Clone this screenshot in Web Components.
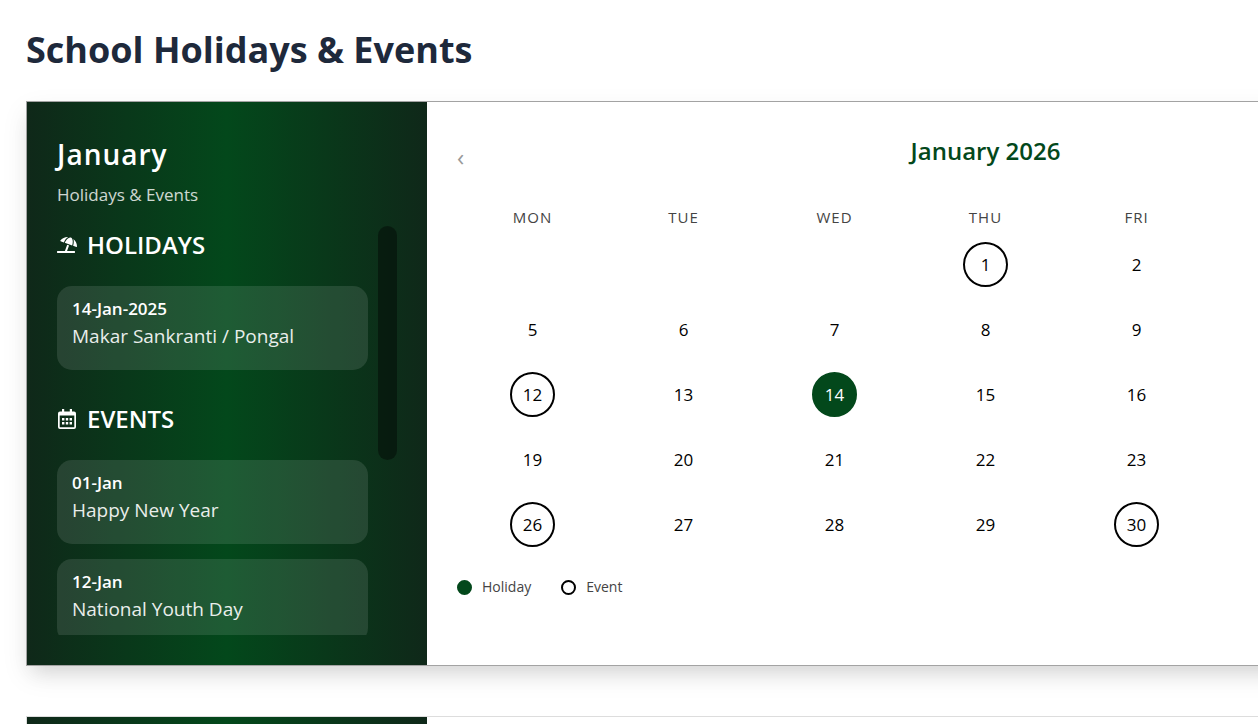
<!DOCTYPE html>
<html lang="en">
<head>
  <meta charset="UTF-8">
  <meta name="viewport" content="width=device-width, initial-scale=1.0">
  <title>School Holidays &amp; Events</title>
  <style>
    body {
      margin: 0;
      padding: 20px 26px 50px;
      overflow-x: hidden;
      background: #fff;
      color: #000;
      font-family: "Open Sans", "Noto Sans", sans-serif;
    }
    h1 {
      margin: 0 0 21px;
      font-size: 36px;
      line-height: 60px;
      font-weight: 700;
      color: #1e293b;
    }
  </style>
</head>
<body>
  <h1>School Holidays &amp; Events</h1>

  <month-card active>
    <month-panel slot="side" month="January">
      <event-group heading="HOLIDAYS" icon="beach">
        <event-item date="14-Jan-2025">Makar Sankranti / Pongal</event-item>
      </event-group>
      <event-group heading="EVENTS" icon="calendar">
        <event-item date="01-Jan">Happy New Year</event-item>
        <event-item date="12-Jan">National Youth Day</event-item>
      </event-group>
    </month-panel>
    <month-calendar year="2026" month="1" holidays="14" events="1,12,26,30"></month-calendar>
  </month-card>

  <month-card>
    <month-panel slot="side" month="February"></month-panel>
    <month-calendar year="2026" month="2"></month-calendar>
  </month-card>

  <script>
    const MONTHS = ['January', 'February', 'March', 'April', 'May', 'June', 'July',
      'August', 'September', 'October', 'November', 'December'];
    const WEEKDAYS = ['MON', 'TUE', 'WED', 'THU', 'FRI', 'SAT', 'SUN'];

    const ICONS = {
      beach: `<svg viewBox="0 0 640 512" width="20" height="16" fill="currentColor" aria-hidden="true">
        <path d="M115.38 136.9l102.11 37.18c35.19-81.54 86.21-144.29 139-173.7-95.88-4.89-188.78 36.96-248.53 111.8-6.69 8.4-2.66 21.05 7.42 24.72zm132.25 48.16l238.48 86.83c35.76-121.38 18.7-231.66-42.63-253.98-7.4-2.7-15.13-4-23.09-4-58.02.01-128.27 69.17-172.76 171.15zM521.48 60.5c6.22 16.3 10.83 34.6 13.2 55.19 5.74 49.89-1.42 108.23-18.95 166.98l102.62 37.36c10.09 3.67 21.31-3.43 21.57-14.17 2.32-95.69-41.91-187.44-118.44-245.36zM560 447.98H321.06L386 269.5l-60.14-21.9-72.9 200.37H16c-8.84 0-16 7.16-16 16.01v32.01C0 504.83 7.16 512 16 512h544c8.84 0 16-7.17 16-16v-32.01c0-8.84-7.16-16.01-16-16.01z"/>
      </svg>`,
      calendar: `<svg viewBox="0 0 20 20" width="20" height="20" fill="currentColor" aria-hidden="true">
        <path fill-rule="evenodd" d="M5 0h2.2v2.4h5.6V0H15v2.4h2a2 2 0 0 1 2 2V18a2 2 0 0 1-2 2H3a2 2 0 0 1-2-2V4.400a2 2 0 0 1 2-2h2zM2.700 6.500v11.300q0 .5.5.5h13.600q.5 0 .5-.5V6.500z"/>
        <path d="M5 9h2.400v2.400H5zM8.800 9h2.400v2.400H8.800zM12.600 9H15v2.400h-2.400zM5 13h2.400v2.400H5zM8.800 13h2.400v2.400H8.800zM12.600 13H15v2.400h-2.400z"/>
      </svg>`
    };

    class MonthCard extends HTMLElement {
      constructor() {
        super();
        this.attachShadow({ mode: 'open' });
        this.shadowRoot.innerHTML = `
          <style>
            :host {
              display: flex;
              min-width: 1519px;
              box-sizing: border-box;
              margin-bottom: 50px;
              border: 1px solid #ddd;
              background: #fff;
            }
            :host([active]) {
              border-color: #a3a3a3;
              box-shadow: 0 10px 25px rgba(0, 0, 0, 0.08), 0 12px 20px -8px rgba(0, 0, 0, 0.12);
            }
            ::slotted(month-panel) {
              flex: 0 0 400px;
            }
            ::slotted(month-calendar) {
              flex: 1;
            }
          </style>
          <slot name="side"></slot>
          <slot></slot>
        `;
      }
    }

    class MonthPanel extends HTMLElement {
      constructor() {
        super();
        this.attachShadow({ mode: 'open' });
      }

      connectedCallback() {
        this.shadowRoot.innerHTML = `
          <style>
            :host {
              display: block;
              box-sizing: border-box;
              padding: 30px;
              color: #fff;
              background: linear-gradient(90deg, #0f2819, #03481b, #0f2819);
            }
            h2 {
              margin: 0;
              font-size: 28px;
              line-height: 45px;
              font-weight: 600;
              letter-spacing: 1px;
            }
            p {
              margin: 4px 0 17px;
              font-size: 17px;
              line-height: 28px;
              opacity: 0.8;
            }
            .scroller {
              display: flex;
              justify-content: space-between;
              height: 409px;
              overflow: hidden;
            }
            .list {
              flex: 1;
              margin-right: 10px;
            }
            .thumb {
              width: 19px;
              height: 234px;
              border-radius: 10px;
              background: rgba(0, 0, 0, 0.4);
            }
          </style>
          <h2>${this.getAttribute('month')}</h2>
          <p>Holidays &amp; Events</p>
          <div class="scroller">
            <div class="list"><slot></slot></div>
            ${this.children.length ? '<div class="thumb"></div>' : ''}
          </div>
        `;
      }
    }

    class EventGroup extends HTMLElement {
      constructor() {
        super();
        this.attachShadow({ mode: 'open' });
      }

      connectedCallback() {
        this.shadowRoot.innerHTML = `
          <style>
            :host {
              display: block;
              margin-bottom: 30px;
            }
            h3 {
              display: flex;
              align-items: center;
              gap: 10px;
              margin: 0 0 22px;
              font-size: 24px;
              line-height: 38px;
              font-weight: 600;
            }
            .items {
              display: flex;
              flex-direction: column;
              gap: 15px;
            }
          </style>
          <h3>${ICONS[this.getAttribute('icon')]}<span>${this.getAttribute('heading')}</span></h3>
          <div class="items"><slot></slot></div>
        `;
      }
    }

    class EventItem extends HTMLElement {
      constructor() {
        super();
        this.attachShadow({ mode: 'open' });
      }

      connectedCallback() {
        this.shadowRoot.innerHTML = `
          <style>
            :host {
              display: block;
              padding: 10px 15px 20px;
              border-radius: 15px;
              background: rgba(255, 255, 255, 0.11);
            }
            strong {
              display: block;
              font-size: 17px;
              line-height: 26px;
              font-weight: 600;
            }
            span {
              display: block;
              font-size: 19px;
              line-height: 28px;
              opacity: 0.9;
            }
          </style>
          <strong>${this.getAttribute('date')}</strong>
          <span><slot></slot></span>
        `;
      }
    }

    class MonthCalendar extends HTMLElement {
      constructor() {
        super();
        this.attachShadow({ mode: 'open' });
      }

      // Comma separated attribute -> array of day numbers
      days(name) {
        return (this.getAttribute(name) || '').split(',').filter(Boolean).map(Number);
      }

      rows() {
        const year = Number(this.getAttribute('year'));
        const month = Number(this.getAttribute('month'));
        const holidays = this.days('holidays');
        const events = this.days('events');
        const offset = (new Date(year, month - 1, 1).getDay() + 6) % 7; // week starts on monday
        const total = new Date(year, month, 0).getDate();

        let html = '';
        for (let start = 1 - offset; start <= total; start += 7) {
          html += '<tr>';
          for (let day = start; day < start + 7; day++) {
            if (day < 1 || day > total) {
              html += '<td></td>';
              continue;
            }
            const type = holidays.includes(day) ? 'holiday' : events.includes(day) ? 'event' : '';
            html += `<td><span class="day ${type}">${day}</span></td>`;
          }
          html += '</tr>';
        }
        return html;
      }

      connectedCallback() {
        const name = MONTHS[this.getAttribute('month') - 1];
        this.shadowRoot.innerHTML = `
          <style>
            :host {
              display: block;
              box-sizing: border-box;
              padding: 30px;
            }
            header {
              display: flex;
              justify-content: space-between;
              align-items: flex-start;
              margin-bottom: 20px;
            }
            button {
              padding: 0;
              border: 0;
              background: none;
              color: #999;
              font: inherit;
              font-size: 24px;
              line-height: 50px;
              cursor: pointer;
            }
            h2 {
              margin: 0;
              font-size: 24px;
              line-height: 38px;
              font-weight: 600;
              color: #03481b;
            }
            table {
              width: 100%;
              table-layout: fixed;
              border-collapse: collapse;
            }
            th {
              height: 30px;
              padding: 0;
              font-size: 15px;
              font-weight: 400;
              letter-spacing: 1px;
              color: #444;
            }
            td {
              height: 65px;
              padding: 0;
            }
            .day {
              display: flex;
              align-items: center;
              justify-content: center;
              box-sizing: border-box;
              width: 45px;
              height: 45px;
              margin: 0 auto;
              border: 2px solid transparent;
              border-radius: 50%;
              font-size: 17px;
            }
            .event {
              border-color: #000;
            }
            .holiday {
              border-color: #03481b;
              background: #03481b;
              color: #fff;
            }
            .legend {
              display: flex;
              gap: 30px;
              margin-top: 18px;
              font-size: 14px;
              line-height: 24px;
              color: #444;
            }
            .legend span {
              display: flex;
              align-items: center;
              gap: 10px;
            }
            .legend i {
              box-sizing: border-box;
              width: 15px;
              height: 15px;
              border: 2px solid #000;
              border-radius: 50%;
            }
            .legend .holiday {
              border-color: #03481b;
            }
          </style>
          <header>
            <button type="button" aria-label="Previous month">‹</button>
            <h2>${name} ${this.getAttribute('year')}</h2>
            <button type="button" aria-label="Next month">›</button>
          </header>
          <table>
            <thead><tr>${WEEKDAYS.map(d => `<th scope="col">${d}</th>`).join('')}</tr></thead>
            <tbody>${this.rows()}</tbody>
          </table>
          <div class="legend">
            <span><i class="holiday"></i>Holiday</span>
            <span><i></i>Event</span>
          </div>
        `;
      }
    }

    customElements.define('month-card', MonthCard);
    customElements.define('month-panel', MonthPanel);
    customElements.define('event-group', EventGroup);
    customElements.define('event-item', EventItem);
    customElements.define('month-calendar', MonthCalendar);
  </script>
</body>
</html>
